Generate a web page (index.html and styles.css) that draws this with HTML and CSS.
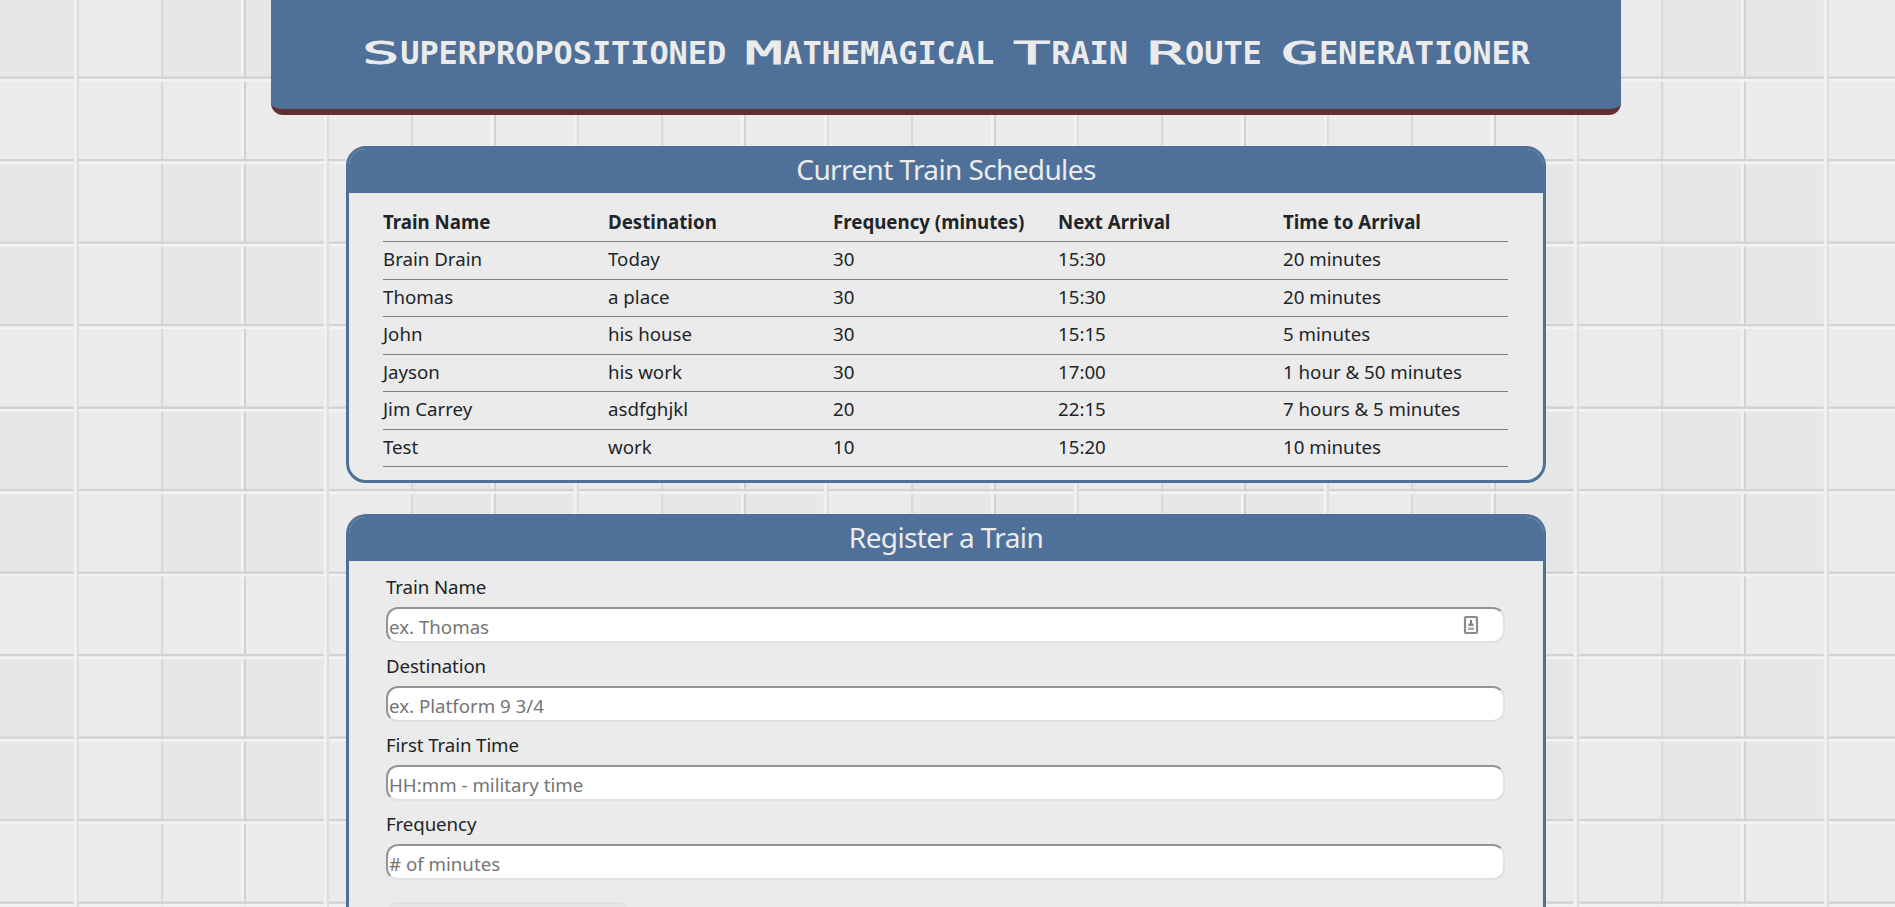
FILE: index.html
```html
<!DOCTYPE html>
<html lang="en">
<head>
<meta charset="utf-8">
<title>Train Route Generationer</title>
<link rel="stylesheet" href="styles.css">
</head>
<body>
<header class="banner">
  <h1 class="banner-title"><span class="cap">S</span>uperpropositioned <span class="cap">M</span>athemagical <span class="cap">T</span>rain <span class="cap">R</span>oute <span class="cap">G</span>enerationer</h1>
</header>
<main class="content">
  <section class="card">
    <h2 class="card-title">Current Train Schedules</h2>
    <table class="schedule">
      <thead><tr><th>Train Name</th><th>Destination</th><th>Frequency (minutes)</th><th>Next Arrival</th><th>Time to Arrival</th></tr></thead>
      <tbody>
        <tr><td>Brain Drain</td><td>Today</td><td>30</td><td>15:30</td><td>20 minutes</td></tr>
        <tr><td>Thomas</td><td>a place</td><td>30</td><td>15:30</td><td>20 minutes</td></tr>
        <tr><td>John</td><td>his house</td><td>30</td><td>15:15</td><td>5 minutes</td></tr>
        <tr><td>Jayson</td><td>his work</td><td>30</td><td>17:00</td><td>1 hour &amp; 50 minutes</td></tr>
        <tr><td>Jim Carrey</td><td>asdfghjkl</td><td>20</td><td>22:15</td><td>7 hours &amp; 5 minutes</td></tr>
        <tr><td>Test</td><td>work</td><td>10</td><td>15:20</td><td>10 minutes</td></tr>
      </tbody>
    </table>
  </section>
  <section class="card card-form">
    <h2 class="card-title">Register a Train</h2>
    <form class="register">
      <label class="field"><span class="field-label">Train Name</span>
        <span class="input-wrap"><input class="input" type="text" placeholder="ex. Thomas">
        <svg class="autofill" viewBox="0 0 16 20" width="16" height="20"><rect x="2" y="2" width="12" height="16" rx="1" fill="#fff" stroke="#8a8a8a" stroke-width="2.2"/><path d="M8 5v3" stroke="#777" stroke-width="2"/><path d="M5.4 11V9.2L7 7.8h2l1.600 1.400V11z" fill="#858585"/><path d="M5 12.500h6v2.500H5z" fill="#aaa"/></svg></span>
      </label>
      <label class="field"><span class="field-label">Destination</span><input class="input" type="text" placeholder="ex. Platform 9 3/4"></label>
      <label class="field"><span class="field-label">First Train Time</span><input class="input" type="text" placeholder="HH:mm - military time"></label>
      <label class="field"><span class="field-label">Frequency</span><input class="input" type="text" placeholder="# of minutes"></label>
      <button class="submit" type="button" aria-label="Submit"></button>
    </form>
  </section>
</main>
</body>
</html>
```
FILE: styles.css
```css
* { box-sizing: border-box; }
html {
  height: 100%;
  overflow: hidden;
  background: #e7e7e7 url("data:image/svg+xml,%3Csvg xmlns='http://www.w3.org/2000/svg' width='250' height='495' viewBox='0 0 250 495'%3E%3Cdefs%3E%3Cg id='t'%3E%3Crect width='250' height='248' fill='%23e7e7e7'/%3E%3Crect y='80' width='250' height='80' fill='%23ebebeb'/%3E%3Crect x='78' width='84' height='248' fill='%23ebebeb'/%3E%3Cpath d='M162.200 0v248' stroke='%23d8d8d8' stroke-width='2'/%3E%3Cpath d='M242.200 0v248' stroke='%23f3f3f3' stroke-width='2.5'/%3E%3Cpath d='M245 0v248' stroke='%23d2d2d2' stroke-width='2'/%3E%3Cpath d='M0 77.700h250M0 160.200h250M0 242.700h250' stroke='%23d2d2d2' stroke-width='2.2'/%3E%3Cpath d='M0 80.200h250M0 162.700h250M0 245.200h250' stroke='%23f3f3f3' stroke-width='2.4'/%3E%3Cpath d='M75.200 0v248' stroke='%23f1f1f1' stroke-width='3'/%3E%3Cpath d='M78 0v248' stroke='%23dedede' stroke-width='2'/%3E%3C/g%3E%3C/defs%3E%3Cuse href='%23t'/%3E%3Cuse href='%23t' y='247.5'/%3E%3C/svg%3E") 0 0 / 250px 495px;
}
body {
  margin: 0;
  width: 1892px;
  height: 907px;
  overflow: hidden;
  display: flex;
  flex-direction: column;
  font: 18.7px/28px "Noto Sans", "Open Sans", sans-serif;
  color: #212529;
}
.banner {
  flex: none;
  width: 1350px;
  height: 115px;
  margin: 0 auto;
  padding-top: 31px;
  background: #4f7099;
  border-bottom: 6px solid #632f2f;
  border-radius: 0 0 12px 12px;
}
.banner-title {
  margin: 0;
  color: #ebebeb;
  font: bold 32px/44px "DejaVu Sans Mono", monospace;
  letter-spacing: -0.1px;
  text-align: center;
  text-transform: uppercase;
  white-space: nowrap;
}
.cap {
  display: inline-block;
  width: 38px;
  text-align: left;
  font-weight: normal;
  -webkit-text-stroke: 0.8px #ebebeb;
  transform: scaleX(1.95);
  transform-origin: 0 50%;
}
.content {
  flex: 1;
  min-height: 0;
  display: flex;
  flex-direction: column;
  gap: 31px;
  width: 1200px;
  margin: 31px auto 0;
}
.card {
  flex: none;
  background: #ebebeb;
  border: 3px solid #4f7099;
  border-radius: 20px;
  overflow: hidden;
}
.card-form {
  flex: 1;
  min-height: 0;
  border-bottom: 0;
  border-radius: 20px 20px 0 0;
}
.card-title {
  margin: 0;
  height: 44px;
  background: #4f7099;
  color: #ebebeb;
  font-size: 28px;
  line-height: 40px;
  font-weight: 400;
  letter-spacing: -0.62px;
  text-align: center;
}
.schedule {
  width: 1125px;
  margin: 11px 0 13px 34px;
  table-layout: fixed;
  border-collapse: collapse;
}
.schedule th, .schedule td {
  height: 37.5px;
  padding: 0 0 2px;
  border-bottom: 1px solid #808080;
  text-align: left;
  white-space: nowrap;
}
.register { padding: 12px 37px 0; }
.field { display: block; height: 79px; }
.field-label { display: block; height: 34px; letter-spacing: -0.1px; }
.input-wrap { display: block; position: relative; }
.input {
  display: block;
  width: 1119px;
  height: 36px;
  padding: 3px 1px 0;
  border: 2px solid;
  border-color: #949494 #e1e1e1 #e1e1e1 #949494;
  border-radius: 12px;
  background: #fff;
  font: inherit;
}
.input::placeholder { color: #757575; opacity: 1; }
.autofill { position: absolute; left: 1077px; top: 8px; }
.submit {
  display: block;
  width: 244px;
  height: 38px;
  margin-top: 13px;
  border: 2px solid #e1e1e1;
  border-radius: 12px;
  background: #e6e6e6;
}
```
